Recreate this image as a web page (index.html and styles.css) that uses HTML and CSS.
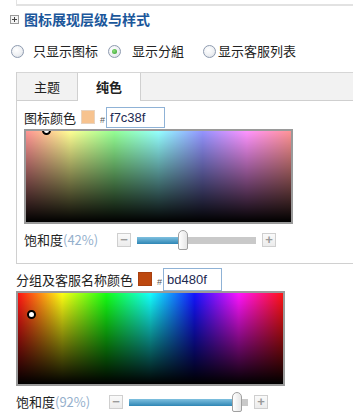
FILE: index.html
```html
<!DOCTYPE html>
<html lang="zh">
<head>
<meta charset="utf-8">
<link rel="stylesheet" href="styles.css">
</head>
<body>
<div class="top-rule"></div>

<div class="section-title">
  <span class="expander"></span>
  <span class="title-text">图标展现层级与样式</span>
</div>

<div class="radio-row">
  <label class="radio-item"><span class="radio"></span><span class="radio-label">只显示图标</span></label>
  <label class="radio-item"><span class="radio checked"></span><span class="radio-label">显示分組</span></label>
  <label class="radio-item tight"><span class="radio"></span><span class="radio-label">显示客服列表</span></label>
</div>

<div class="panel">
  <div class="tabbar">
    <div class="tab">主题</div>
    <div class="tab active">纯色</div>
  </div>
  <div class="panel-body">
    <div class="color-row">
      <span class="color-label">图标颜色</span>
      <span class="swatch swatch-a"></span>
      <span class="hash">#</span>
      <span class="hex-input">f7c38f</span>
    </div>
    <div class="picker picker-a">
      <span class="marker marker-a"></span>
    </div>
    <div class="slider-row">
      <span class="sat-label">饱和度<span class="pct">(42%)</span></span>
      <span class="step-btn">−</span>
      <span class="track"><span class="fill" style="width:46px"></span><span class="thumb" style="left:46px"></span></span>
      <span class="step-btn">+</span>
    </div>
  </div>
</div>

<div class="section-two">
  <div class="color-row">
    <span class="color-label">分组及客服名称颜色</span>
    <span class="swatch swatch-b"></span>
    <span class="hash">#</span>
    <span class="hex-input tall">bd480f</span>
  </div>
  <div class="picker picker-b">
    <span class="marker marker-b"></span>
  </div>
  <div class="slider-row">
    <span class="sat-label">饱和度<span class="pct">(92%)</span></span>
    <span class="step-btn">−</span>
    <span class="track"><span class="fill" style="width:108px"></span><span class="thumb" style="left:108px"></span></span>
    <span class="step-btn">+</span>
  </div>
</div>
</body>
</html>
```

FILE: styles.css
```css
html, body {
  margin: 0;
  padding: 0;
  background: #fff;
}

body {
  font-family: "Noto Sans CJK SC", "Noto Sans", sans-serif;
  font-size: 13px;
  color: #222;
  width: 353px;
  overflow: hidden;
}

.top-rule {
  margin-left: 16px;
  height: 4px;
  border-left: 1px solid #e2e2e2;
  border-bottom: 2px solid #e2e2e2;
}

.section-title {
  display: flex;
  align-items: center;
  height: 14px;
  margin-top: 6px;
  padding-left: 10px;
}

.expander {
  position: relative;
  width: 7px;
  height: 7px;
  border: 1px solid #9a9a9a;
  background: #f4f4f4;
  margin-right: 5px;
  margin-top: 1px;
}

.expander::before,
.expander::after {
  content: "";
  position: absolute;
  background: #444;
}

.expander::before {
  left: 1px;
  top: 3px;
  width: 5px;
  height: 1px;
}

.expander::after {
  left: 3px;
  top: 1px;
  width: 1px;
  height: 5px;
}

.title-text {
  font-size: 14px;
  font-weight: bold;
  color: #1b579b;
  line-height: 14px;
}

.radio-row {
  display: flex;
  align-items: center;
  height: 16px;
  margin-top: 17px;
  padding-left: 11px;
}

.radio-item {
  display: flex;
  align-items: center;
  margin-right: 10px;
}

.radio {
  position: relative;
  box-sizing: border-box;
  width: 13px;
  height: 13px;
  border-radius: 50%;
  border: 1px solid #8e9bb0;
  background: radial-gradient(circle at 40% 35%, #ffffff 0%, #eef0f3 55%, #d3d7de 100%);
  margin-right: 9px;
}

.radio.checked::after {
  content: "";
  position: absolute;
  left: 3px;
  top: 3px;
  width: 5px;
  height: 5px;
  border-radius: 50%;
  background: radial-gradient(circle at 40% 40%, #8be07a 0%, #2f9a2a 100%);
}

.radio-item:nth-child(2) .radio {
  margin-right: 11px;
}

.radio-item:nth-child(2) {
  margin-right: 19px;
}

.radio-item.tight .radio {
  margin-right: 2px;
}

.radio-label {
  line-height: 16px;
  color: #222;
}

.panel {
  margin-top: 13px;
  margin-left: 16px;
  border-left: 1px solid #d0d0d0;
  border-bottom: 1px solid #d0d0d0;
}

.tabbar {
  display: flex;
  height: 27px;
  background: #f2f2f2;
  border-top: 1px solid #d6d6d6;
  border-bottom: 1px solid #cfcfcf;
}

.tab {
  width: 60px;
  height: 27px;
  line-height: 27px;
  text-align: center;
  border-right: 1px solid #d0d0d0;
  color: #222;
}

.tab.active {
  width: 62px;
  height: 28px;
  background: #fff;
  font-weight: bold;
}

.panel-body {
  padding: 6px 0 13px 7px;
}

.color-row {
  display: flex;
  align-items: center;
  height: 21px;
}

.color-label {
  color: #222;
  line-height: 16px;
  margin-right: 5px;
}

.swatch {
  box-sizing: border-box;
  width: 14px;
  height: 14px;
  margin-top: -1px;
}

.swatch-a {
  background: #f7c38f;
  border: 1px solid #e8d3bf;
}

.swatch-b {
  background: #bd480f;
  border: 1px solid #a84010;
}

.hash {
  font-family: "Liberation Sans", sans-serif;
  font-size: 9px;
  color: #555;
  margin-left: 5px;
  margin-right: 1px;
  align-self: flex-end;
  line-height: 15px;
}

.hex-input {
  box-sizing: border-box;
  width: 59px;
  height: 21px;
  border: 1px solid #8fb2d6;
  background: #fff;
  font-family: "Liberation Sans", Arial, sans-serif;
  font-size: 13px;
  line-height: 19px;
  padding-left: 3px;
  color: #1d2a52;
}

.hex-input.tall {
  height: 23px;
  line-height: 21px;
}

.picker {
  position: relative;
  box-sizing: border-box;
  width: 269px;
  height: 95px;
  margin-top: 1px;
  border: 2px solid #9a9a9a;
  overflow: hidden;
}

.picker-a {
  background:
    linear-gradient(to bottom, rgba(0,0,0,0) 0%, #000 100%),
    linear-gradient(rgba(255,255,255,0.58), rgba(255,255,255,0.58)),
    linear-gradient(to right, #f00 0%, #ff0 16.66%, #0f0 33.33%, #0ff 50%, #00f 66.66%, #f0f 83.33%, #f00 100%);
}

.picker-b {
  background:
    linear-gradient(to bottom, rgba(0,0,0,0) 0%, #000 100%),
    linear-gradient(rgba(255,255,255,0.08), rgba(255,255,255,0.08)),
    linear-gradient(to right, #f00 0%, #ff0 16.66%, #0f0 33.33%, #0ff 50%, #00f 66.66%, #f0f 83.33%, #f00 100%);
}

.marker {
  position: absolute;
  box-sizing: border-box;
  width: 9px;
  height: 9px;
  border-radius: 50%;
  border: 2px solid #000;
  background: #fff;
}

.marker-a {
  left: 16px;
  top: -5px;
}

.marker-b {
  left: 9px;
  top: 17px;
}

.slider-row {
  display: flex;
  align-items: center;
  height: 20px;
  margin-top: 6px;
}

.sat-label {
  width: 93px;
  color: #222;
  line-height: 16px;
  white-space: nowrap;
}

.pct {
  color: #94afcc;
}

.step-btn {
  box-sizing: border-box;
  width: 14px;
  height: 14px;
  border: 1px solid #cfcfcf;
  background: linear-gradient(#fafafa, #ececec);
  color: #9a9a9a;
  font-family: "Liberation Sans", sans-serif;
  font-size: 13px;
  font-weight: bold;
  line-height: 12px;
  text-align: center;
}

.track {
  position: relative;
  width: 119px;
  height: 7px;
  margin: 0 6px;
  background: #c9c9c9;
}

.fill {
  position: absolute;
  left: 0;
  top: 0;
  height: 7px;
  background: linear-gradient(#7fc0df, #2e86b5);
}

.thumb {
  position: absolute;
  top: -7px;
  box-sizing: border-box;
  width: 10px;
  height: 20px;
  margin-left: -5px;
  border: 1px solid #a0a0a0;
  border-radius: 5px 5px 2px 2px;
  background: linear-gradient(to right, #ffffff, #e6e6e6);
}

.section-two {
  padding-top: 5px;
  padding-left: 16px;
}
```
